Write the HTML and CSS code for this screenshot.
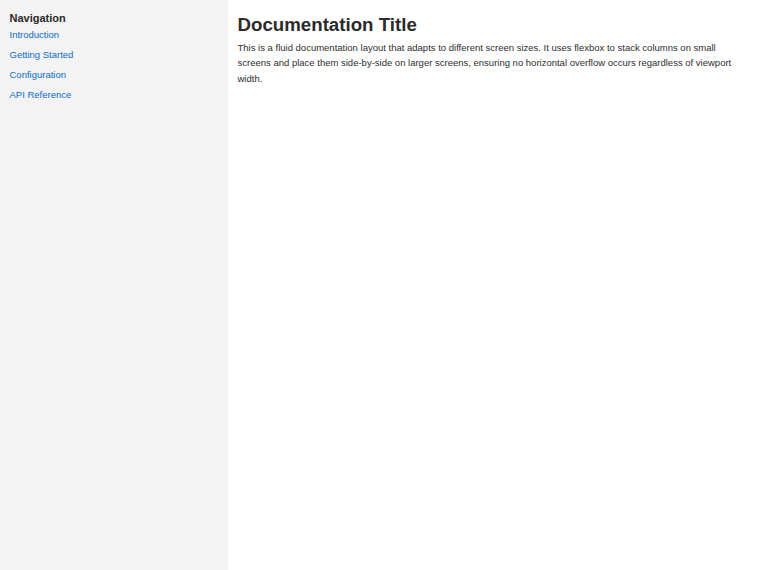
FILE: index.html
```html
<!DOCTYPE html>
<html lang="en">
<head>
    <meta charset="UTF-8">
    <meta name="viewport" content="width=device-width, initial-scale=1.0">
    <title>Documentation</title>
    <link rel="stylesheet" href="styles.css">
</head>
<body>
    <div class="layout">
        <aside class="sidebar">
            <h3>Navigation</h3>
            <ul class="nav">
                <li><a href="#">Introduction</a></li>
                <li><a href="#">Getting Started</a></li>
                <li><a href="#">Configuration</a></li>
                <li><a href="#">API Reference</a></li>
            </ul>
        </aside>
        <main class="content">
            <h1>Documentation Title</h1>
            <p>This is a fluid documentation layout that adapts to different screen sizes. It uses flexbox to stack columns on small screens and place them side-by-side on larger screens, ensuring no horizontal overflow occurs regardless of viewport width.</p>
        </main>
    </div>
</body>
</html>
```

FILE: styles.css
```css
* {
    margin: 0;
    padding: 0;
    box-sizing: border-box;
}

body {
    font-family: 'Liberation Sans', Arial, sans-serif;
    color: #333;
    background: #fff;
}

.layout {
    display: flex;
    min-height: 100vh;
}

.sidebar {
    flex: 0 0 30%;
    background: #f3f3f3;
    padding: 12px 9.5px;
}

.sidebar h3 {
    font-size: 11px;
    font-weight: bold;
    color: #2a2a2a;
    margin-bottom: 3px;
}

.nav {
    list-style: none;
}

.nav li {
    font-size: 9.5px;
    line-height: 15.2px;
    margin-bottom: 4.8px;
}

.nav a {
    color: #0b6bcb;
    text-decoration: none;
}

.content {
    flex: 1;
    padding: 12px 9.5px;
}

.content h1 {
    font-size: 18.7px;
    color: #2a2a2a;
    margin-top: 2px;
    margin-bottom: 4.2px;
}

.content p {
    font-size: 9.5px;
    line-height: 15.2px;
    color: #2e2e2e;
}
```
